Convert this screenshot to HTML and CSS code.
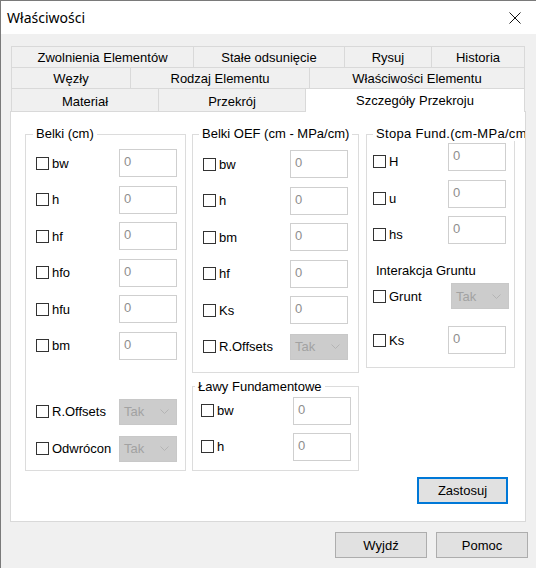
FILE: index.html
```
<!DOCTYPE html>
<html lang="pl">
<head>
<meta charset="utf-8">
<title>Właściwości</title>
<link rel="stylesheet" href="styles.css">
</head>
<body>
<div class="window">
  <div class="titlebar">
    <span class="title">Właściwości</span>
    <svg class="close" width="12" height="12" viewBox="0 0 12 12"><path d="M0.5 0.5 L11.5 11.5 M11.5 0.5 L0.5 11.5" stroke="#111" stroke-width="1" fill="none"/></svg>
  </div>

  <div class="tabs">
    <div class="tabrow r1">
      <div class="tab w182">Zwolnienia Elementów</div>
      <div class="tab w151">Stałe odsunięcie</div>
      <div class="tab w87">Rysuj</div>
      <div class="tab w94 last">Historia</div>
    </div>
    <div class="tabrow r2">
      <div class="tab w119">Węzły</div>
      <div class="tab w179">Rodzaj Elementu</div>
      <div class="tab w216 last">Właściwości Elementu</div>
    </div>
    <div class="tabrow r3">
      <div class="tab w147">Materiał</div>
      <div class="tab w147">Przekrój</div>
      <div class="tab w220 last selected">Szczegóły Przekroju</div>
    </div>
  </div>

  <div class="panel">
    <div class="groups">
      <fieldset class="group g1">
        <legend>Belki (cm)</legend>
        <div class="rows">
          <div class="row"><span class="chk"><span class="box"></span>bw</span><div class="field">0</div></div>
          <div class="row"><span class="chk"><span class="box"></span>h</span><div class="field">0</div></div>
          <div class="row"><span class="chk"><span class="box"></span>hf</span><div class="field">0</div></div>
          <div class="row"><span class="chk"><span class="box"></span>hfo</span><div class="field">0</div></div>
          <div class="row"><span class="chk"><span class="box"></span>hfu</span><div class="field">0</div></div>
          <div class="row"><span class="chk"><span class="box"></span>bm</span><div class="field">0</div></div>
        </div>
        <div class="rows combos">
          <div class="row crow"><span class="chk"><span class="box"></span>R.Offsets</span><div class="combo"><span>Tak</span><svg width="9" height="5" viewBox="0 0 9 5"><path d="M0.5 0.5 L4.5 4.5 L8.5 0.5" stroke="#b4b4b4" fill="none"/></svg></div></div>
          <div class="row crow"><span class="chk"><span class="box"></span>Odwrócon</span><div class="combo"><span>Tak</span><svg width="9" height="5" viewBox="0 0 9 5"><path d="M0.5 0.5 L4.5 4.5 L8.5 0.5" stroke="#b4b4b4" fill="none"/></svg></div></div>
        </div>
      </fieldset>

      <div class="col2">
        <fieldset class="group g2">
          <legend>Belki OEF (cm - MPa/cm)</legend>
          <div class="rows">
            <div class="row"><span class="chk"><span class="box"></span>bw</span><div class="field">0</div></div>
            <div class="row"><span class="chk"><span class="box"></span>h</span><div class="field">0</div></div>
            <div class="row"><span class="chk"><span class="box"></span>bm</span><div class="field">0</div></div>
            <div class="row"><span class="chk"><span class="box"></span>hf</span><div class="field">0</div></div>
            <div class="row"><span class="chk"><span class="box"></span>Ks</span><div class="field">0</div></div>
            <div class="row"><span class="chk"><span class="box"></span>R.Offsets</span><div class="combo"><span>Tak</span><svg width="9" height="5" viewBox="0 0 9 5"><path d="M0.5 0.5 L4.5 4.5 L8.5 0.5" stroke="#b4b4b4" fill="none"/></svg></div></div>
          </div>
        </fieldset>
        <fieldset class="group g4">
          <legend>Ławy Fundamentowe</legend>
          <div class="rows">
            <div class="row"><span class="chk"><span class="box"></span>bw</span><div class="field">0</div></div>
            <div class="row"><span class="chk"><span class="box"></span>h</span><div class="field">0</div></div>
          </div>
        </fieldset>
      </div>

      <fieldset class="group g3">
        <legend>Stopa Fund.(cm-MPa/cm)</legend>
        <div class="rows">
          <div class="row low"><span class="chk"><span class="box"></span>H</span><div class="field">0</div></div>
          <div class="row low"><span class="chk"><span class="box"></span>u</span><div class="field">0</div></div>
          <div class="row low"><span class="chk"><span class="box"></span>hs</span><div class="field">0</div></div>
        </div>
        <div class="subtitle">Interakcja Gruntu</div>
        <div class="row crow grunt"><span class="chk"><span class="box"></span>Grunt</span><div class="combo"><span>Tak</span><svg width="9" height="5" viewBox="0 0 9 5"><path d="M0.5 0.5 L4.5 4.5 L8.5 0.5" stroke="#b4b4b4" fill="none"/></svg></div></div>
        <div class="row ks"><span class="chk"><span class="box"></span>Ks</span><div class="field">0</div></div>
      </fieldset>
    </div>

    <div class="apply-row">
      <button class="btn apply">Zastosuj</button>
    </div>
  </div>

  <div class="footer">
    <button class="btn foot">Wyjdź</button>
    <button class="btn foot">Pomoc</button>
  </div>
</div>
</body>
</html>
```

FILE: styles.css
```
* { box-sizing: border-box; }

body {
  margin: 0;
  font-family: "Liberation Sans", Arial, sans-serif;
  font-size: 13px;
  color: #000;
  background: #f0f0f0;
}

.window {
  width: 536px;
  height: 568px;
  background: #f0f0f0;
  border-left: 1px solid #7a7a7a;
  border-top: 1px solid #7a7a7a;
  display: flex;
  flex-direction: column;
  overflow: hidden;
}

.titlebar {
  height: 33px;
  flex: none;
  background: #fff;
  display: flex;
  align-items: center;
  justify-content: space-between;
  padding: 0 15px 0 6px;
}

.title {
  font-family: "Noto Sans", "Open Sans", sans-serif;
  font-size: 14px;
  color: #000;
}

.close { display: block; }

/* Tabs */
.tabs {
  margin: 12px 0 0 10px;
  width: 514px;
  flex: none;
}

.tabrow {
  display: flex;
}

.tabrow.r1, .tabrow.r2 { height: 21px; }
.tabrow.r3 { height: 23px; }

.tab {
  background: #f0f0f0;
  border-top: 1px solid #d9d9d9;
  border-left: 1px solid #d9d9d9;
  display: flex;
  align-items: center;
  justify-content: center;
  white-space: nowrap;
  flex: none;
  height: 100%;
}

.tab.last { border-right: 1px solid #d9d9d9; }

.r3 .tab { padding-top: 3px; }

.tab.selected {
  background: #fff;
  height: 24px;
  padding-top: 0;
  position: relative;
  z-index: 2;
}

.w182 { width: 182px; }
.w151 { width: 151px; }
.w87 { width: 87px; }
.w94 { width: 94px; }
.w119 { width: 119px; }
.w179 { width: 179px; }
.w216 { width: 216px; }
.w147 { width: 147px; }
.w220 { width: 220px; }

/* Panel */
.panel {
  margin-left: 9px;
  width: 516px;
  height: 411px;
  flex: none;
  background: #fff;
  border: 1px solid #d9d9d9;
  overflow: hidden;
  display: flex;
  flex-direction: column;
  position: relative;
  z-index: 1;
}

.groups {
  display: flex;
  align-items: flex-start;
  padding: 15px 0 0 14px;
}

.group {
  margin: 0;
  padding: 0;
  border: 1px solid #dcdcdc;
  min-width: 0;
}

.group legend {
  font-size: 13px;
  line-height: 14px;
  padding: 0 3px;
  white-space: nowrap;
  background: #fff;
}

.rows {
  display: flex;
  flex-direction: column;
}

.row {
  display: flex;
  align-items: center;
  height: 28px;
  flex: none;
}

.chk {
  display: flex;
  align-items: center;
  gap: 3px;
  flex: none;
  white-space: nowrap;
}

.box {
  width: 13px;
  height: 13px;
  border: 1px solid #333;
  background: #fff;
  flex: none;
}

.field {
  width: 58px;
  height: 28px;
  border: 1px solid #cfcfcf;
  background: #fff;
  color: #8e8e8e;
  line-height: 15px;
  padding: 4px 0 0 4px;
  flex: none;
}

.combo {
  width: 58px;
  height: 26px;
  background: #cccccc;
  border: 1px solid #c8c8c8;
  color: #a2a2a2;
  display: flex;
  align-items: center;
  justify-content: space-between;
  padding: 0 7px 0 4px;
  flex: none;
}

.combo svg { display: block; }

/* Group 1 */
.g1 { width: 161px; }
.g1 legend { margin-left: 7px; }
.g1 .rows { padding: 8px 0 0 10px; gap: 8.6px; }
.g1 .chk { width: 83px; }
.g1 .combos { padding: 39px 0 8px 10px; gap: 11px; }
.g1 .crow { height: 26px; }

/* Column 2 */
.col2 {
  margin-left: 6px;
  width: 167px;
  display: flex;
  flex-direction: column;
}

.g2 legend { margin-left: 6px; }
.g2 .rows { padding: 9px 0 11px 10px; gap: 8.6px; }
.g2 .chk { width: 87px; }

.g4 { margin-top: 7px; }
.g4 legend { margin-left: 2px; }
.g4 .rows { padding: 3px 0 9px 8px; gap: 8px; }
.g4 .chk { width: 92px; }

/* Group 3 */
.g3 {
  margin-left: 7px;
  width: 149px;
  padding: 0 0 13px 6px;
}
.g3 legend { margin-left: 0; letter-spacing: 0.3px; }
.g3 .rows { padding-top: 2px; gap: 8.5px; }
.g3 .chk { width: 75px; }
.g3 .low .chk { padding-top: 9px; }

.subtitle {
  margin-top: 18.5px;
  line-height: 15px;
  padding-left: 3px;
}

.g3 .grunt {
  height: 26px;
  margin-top: 5.5px;
}
.g3 .grunt .combo { margin-left: 3px; }
.g3 .ks { margin-top: 17px; }

/* Buttons */
.btn {
  font-family: "Liberation Sans", Arial, sans-serif;
  font-size: 13px;
  color: #000;
  background: #e1e1e1;
  border: 1px solid #adadad;
  padding: 0;
  margin: 0;
}

.apply-row {
  display: flex;
  justify-content: flex-end;
  padding: 6px 17px 0 0;
}

.apply {
  width: 91px;
  height: 27px;
  border: 2px solid #0078d7;
}

.footer {
  display: flex;
  justify-content: flex-end;
  gap: 9px;
  padding-right: 8px;
  margin-top: 10px;
}

.foot {
  width: 92px;
  height: 26px;
}
```
